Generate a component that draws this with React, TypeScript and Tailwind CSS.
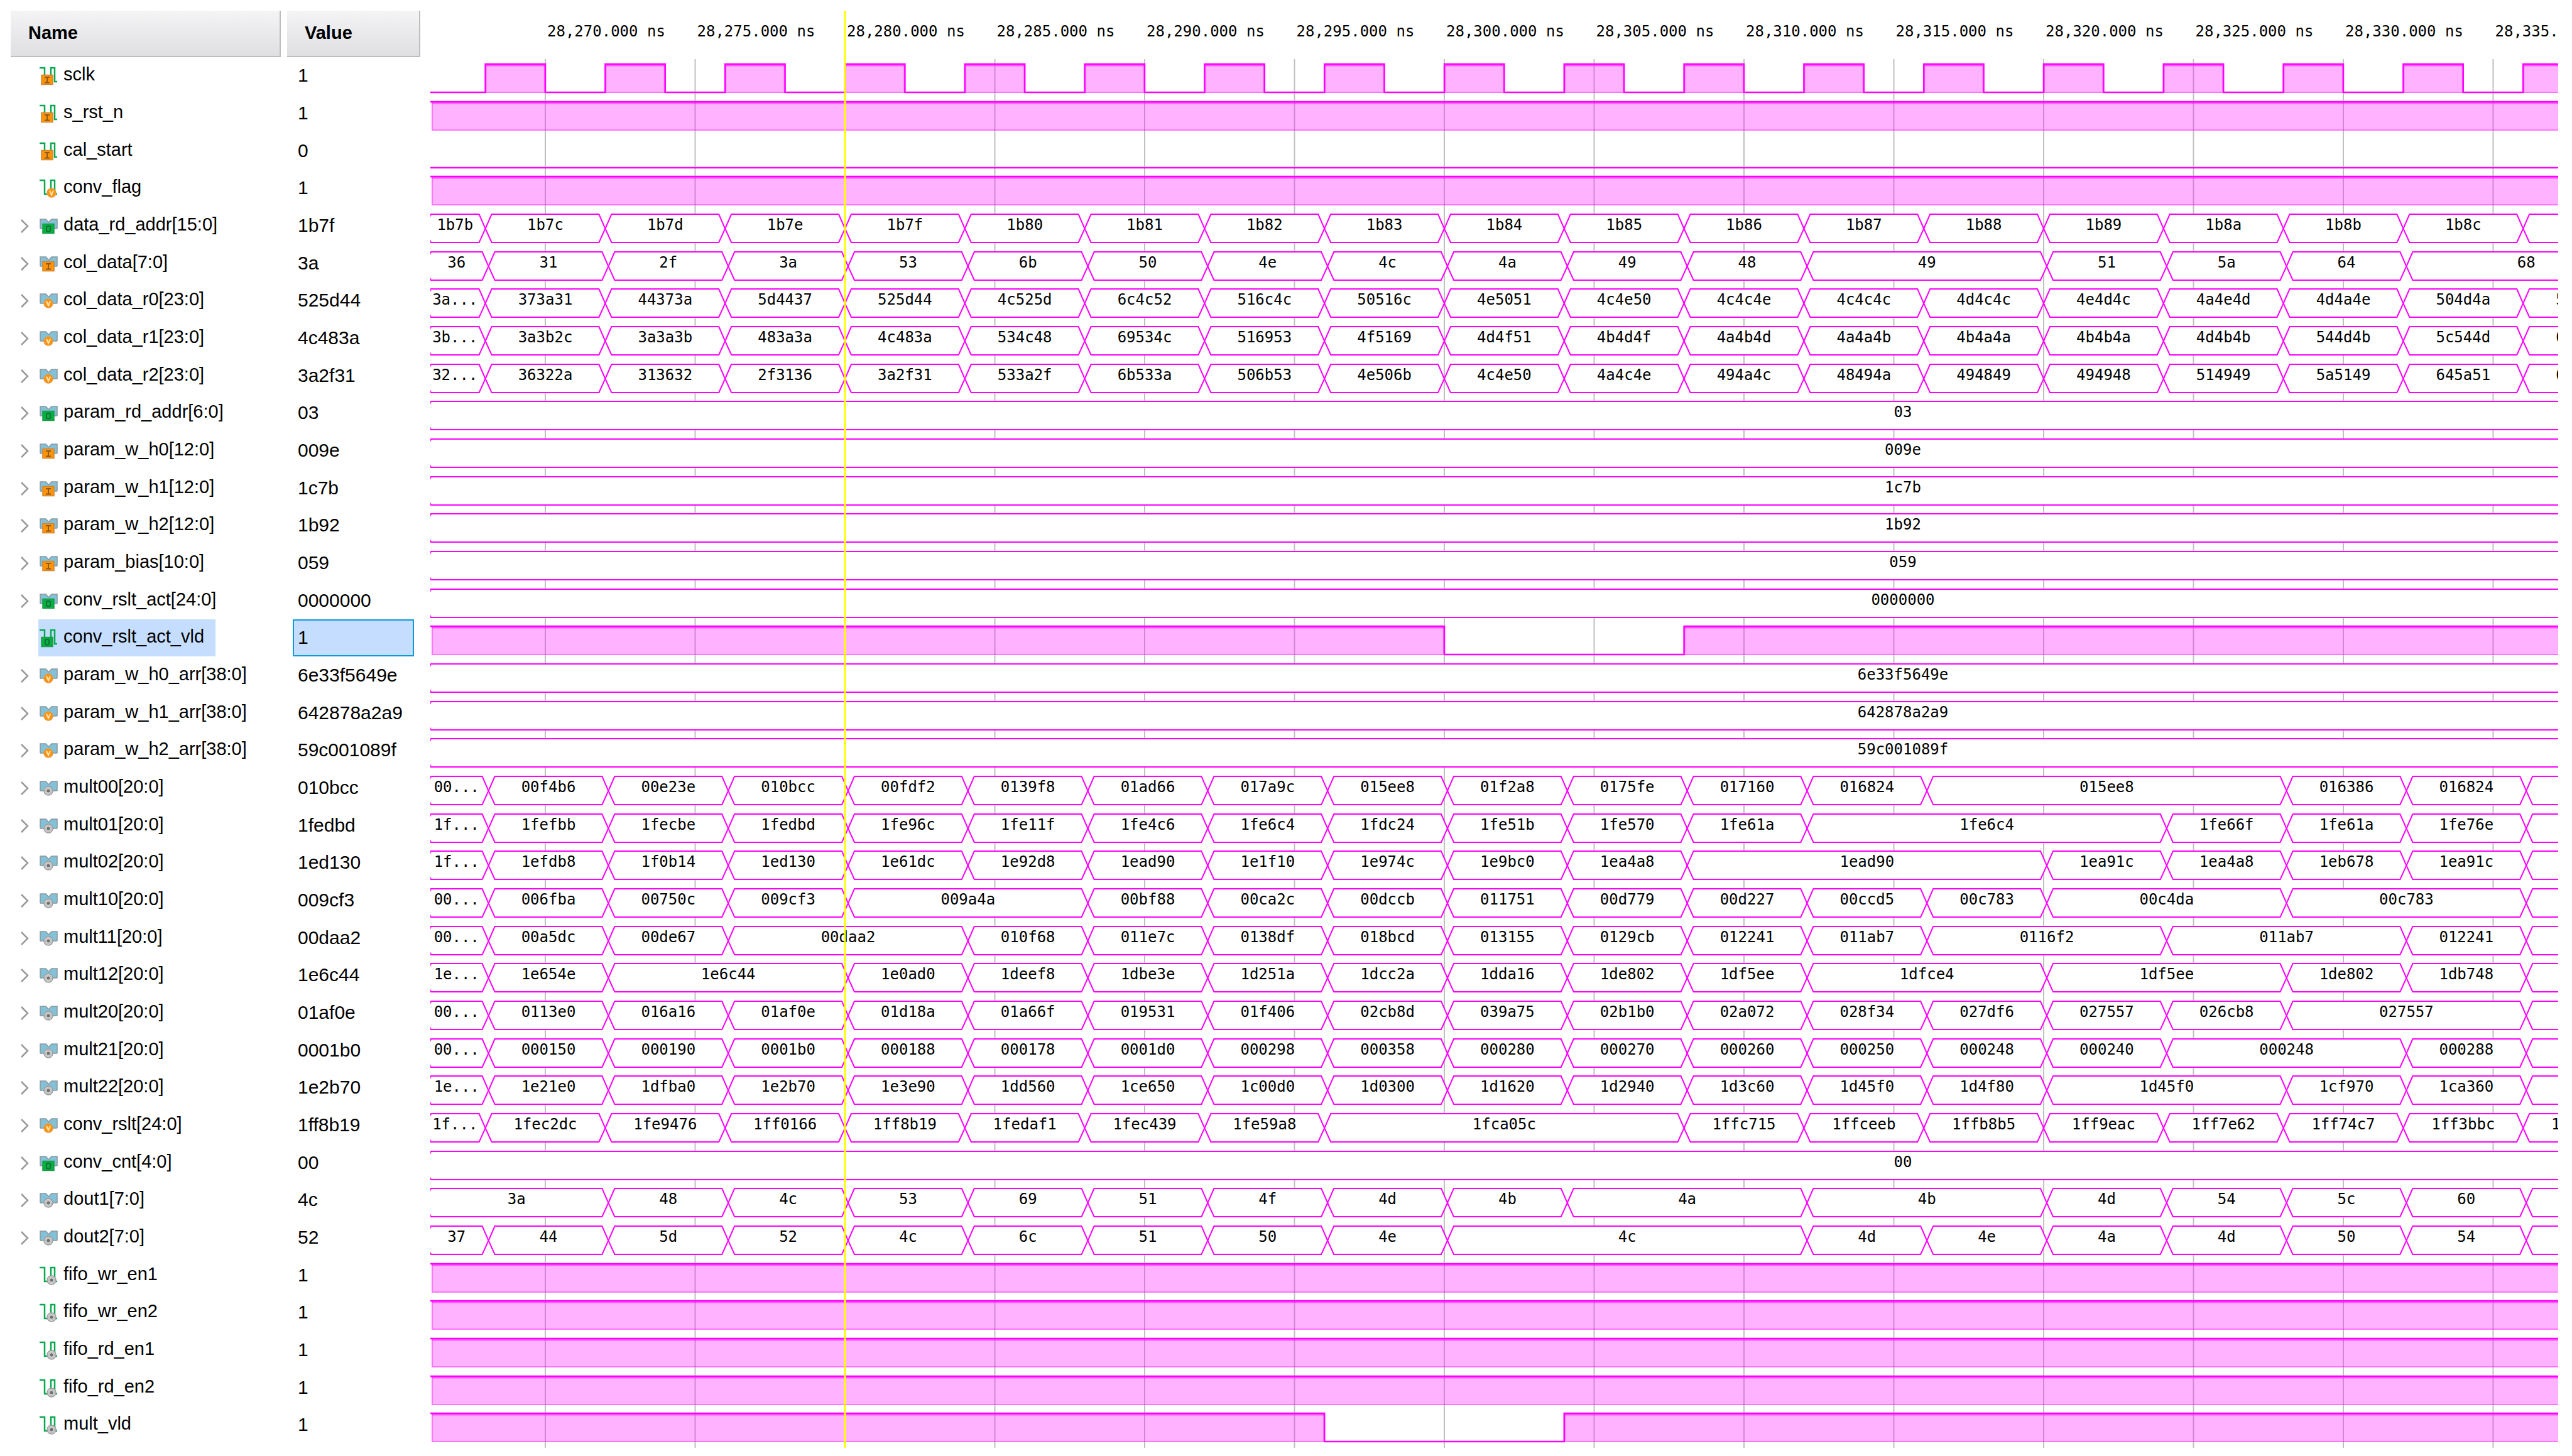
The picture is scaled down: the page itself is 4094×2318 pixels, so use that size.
import clsx from "clsx";

type Kind = "bit" | "bus";
type Badge = "in" | "out" | "var" | "reg";

type Signal = {
  name: string;
  value: string;
  kind: Kind;
  badge: Badge;
  // bus: values in clock order, "v*3" lasts three clocks
  data?: string;
  // bus that changes slightly after the clock edge
  late?: boolean;
  // bit: [from, to] spans in clocks where the line is high
  high?: number[][];
  selected?: boolean;
};

const PX_PER_NS = 47.7;
const START_NS = 28270;
const START_X = 183;
const CLOCK = PX_PER_NS * 4;
const FIRST_EDGE = START_X - PX_PER_NS * 2;
const CURSOR_NS = 28280;
const FAR = 4697;
const ALWAYS = [[-1, 40]];

const edge = (k: number) => FIRST_EDGE + k * CLOCK;
const rowTop = (i: number) => 91 + i * 60 - Math.floor(i / 3);

const ticks = Array.from({ length: 14 }, (_, i) => START_NS + i * 5);
const clockHigh = Array.from({ length: 18 }, (_, i) => [i, i + 0.5]);

const signals: Signal[] = [
  { name: "sclk", value: "1", kind: "bit", badge: "in", high: clockHigh },
  { name: "s_rst_n", value: "1", kind: "bit", badge: "in", high: ALWAYS },
  { name: "cal_start", value: "0", kind: "bit", badge: "in", high: [] },
  { name: "conv_flag", value: "1", kind: "bit", badge: "var", high: ALWAYS },
  {
    name: "data_rd_addr[15:0]", value: "1b7f", kind: "bus", badge: "out",
    data: "1b7b 1b7c 1b7d 1b7e 1b7f 1b80 1b81 1b82 1b83 1b84 1b85 1b86 1b87 1b88 1b89 1b8a 1b8b 1b8c",
  },
  {
    name: "col_data[7:0]", value: "3a", kind: "bus", badge: "in", late: true,
    data: "36 31 2f 3a 53 6b 50 4e 4c 4a 49 48 49*2 51 5a 64 68*2",
  },
  {
    name: "col_data_r0[23:0]", value: "525d44", kind: "bus", badge: "var",
    data: "3a... 373a31 44373a 5d4437 525d44 4c525d 6c4c52 516c4c 50516c 4e5051 4c4e50 4c4c4e 4c4c4c 4d4c4c 4e4d4c 4a4e4d 4d4a4e 504d4a 54504d",
  },
  {
    name: "col_data_r1[23:0]", value: "4c483a", kind: "bus", badge: "var",
    data: "3b... 3a3b2c 3a3a3b 483a3a 4c483a 534c48 69534c 516953 4f5169 4d4f51 4b4d4f 4a4b4d 4a4a4b 4b4a4a 4b4b4a 4d4b4b 544d4b 5c544d 605c54",
  },
  {
    name: "col_data_r2[23:0]", value: "3a2f31", kind: "bus", badge: "var",
    data: "32... 36322a 313632 2f3136 3a2f31 533a2f 6b533a 506b53 4e506b 4c4e50 4a4c4e 494a4c 48494a 494849 494948 514949 5a5149 645a51 68645a",
  },
  { name: "param_rd_addr[6:0]", value: "03", kind: "bus", badge: "out" },
  { name: "param_w_h0[12:0]", value: "009e", kind: "bus", badge: "in" },
  { name: "param_w_h1[12:0]", value: "1c7b", kind: "bus", badge: "in" },
  { name: "param_w_h2[12:0]", value: "1b92", kind: "bus", badge: "in" },
  { name: "param_bias[10:0]", value: "059", kind: "bus", badge: "in" },
  { name: "conv_rslt_act[24:0]", value: "0000000", kind: "bus", badge: "out" },
  {
    name: "conv_rslt_act_vld", value: "1", kind: "bit", badge: "out", selected: true,
    high: [[-1, 8], [10, 40]],
  },
  { name: "param_w_h0_arr[38:0]", value: "6e33f5649e", kind: "bus", badge: "var" },
  { name: "param_w_h1_arr[38:0]", value: "642878a2a9", kind: "bus", badge: "var" },
  { name: "param_w_h2_arr[38:0]", value: "59c001089f", kind: "bus", badge: "var" },
  {
    name: "mult00[20:0]", value: "010bcc", kind: "bus", badge: "reg", late: true,
    data: "00... 00f4b6 00e23e 010bcc 00fdf2 0139f8 01ad66 017a9c 015ee8 01f2a8 0175fe 017160 016824 015ee8*3 016386 016824",
  },
  {
    name: "mult01[20:0]", value: "1fedbd", kind: "bus", badge: "reg", late: true,
    data: "1f... 1fefbb 1fecbe 1fedbd 1fe96c 1fe11f 1fe4c6 1fe6c4 1fdc24 1fe51b 1fe570 1fe61a 1fe6c4*3 1fe66f 1fe61a 1fe76e",
  },
  {
    name: "mult02[20:0]", value: "1ed130", kind: "bus", badge: "reg", late: true,
    data: "1f... 1efdb8 1f0b14 1ed130 1e61dc 1e92d8 1ead90 1e1f10 1e974c 1e9bc0 1ea4a8 1ead90*3 1ea91c 1ea4a8 1eb678 1ea91c",
  },
  {
    name: "mult10[20:0]", value: "009cf3", kind: "bus", badge: "reg", late: true,
    data: "00... 006fba 00750c 009cf3 009a4a*2 00bf88 00ca2c 00dccb 011751 00d779 00d227 00ccd5 00c783 00c4da*2 00c783*2",
  },
  {
    name: "mult11[20:0]", value: "00daa2", kind: "bus", badge: "reg", late: true,
    data: "00... 00a5dc 00de67 00daa2*2 010f68 011e7c 0138df 018bcd 013155 0129cb 012241 011ab7 0116f2*2 011ab7*2 012241",
  },
  {
    name: "mult12[20:0]", value: "1e6c44", kind: "bus", badge: "reg", late: true,
    data: "1e... 1e654e 1e6c44*2 1e0ad0 1deef8 1dbe3e 1d251a 1dcc2a 1dda16 1de802 1df5ee 1dfce4*2 1df5ee*2 1de802 1db748",
  },
  {
    name: "mult20[20:0]", value: "01af0e", kind: "bus", badge: "reg", late: true,
    data: "00... 0113e0 016a16 01af0e 01d18a 01a66f 019531 01f406 02cb8d 039a75 02b1b0 02a072 028f34 027df6 027557 026cb8 027557*2",
  },
  {
    name: "mult21[20:0]", value: "0001b0", kind: "bus", badge: "reg", late: true,
    data: "00... 000150 000190 0001b0 000188 000178 0001d0 000298 000358 000280 000270 000260 000250 000248 000240 000248*2 000288",
  },
  {
    name: "mult22[20:0]", value: "1e2b70", kind: "bus", badge: "reg", late: true,
    data: "1e... 1e21e0 1dfba0 1e2b70 1e3e90 1dd560 1ce650 1c00d0 1d0300 1d1620 1d2940 1d3c60 1d45f0 1d4f80 1d45f0*2 1cf970 1ca360",
  },
  {
    name: "conv_rslt[24:0]", value: "1ff8b19", kind: "bus", badge: "var",
    data: "1f... 1fec2dc 1fe9476 1ff0166 1ff8b19 1fedaf1 1fec439 1fe59a8 1fca05c*3 1ffc715 1ffceeb 1ffb8b5 1ff9eac 1ff7e62 1ff74c7 1ff3bbc 1ff3bbc",
  },
  { name: "conv_cnt[4:0]", value: "00", kind: "bus", badge: "out" },
  {
    name: "dout1[7:0]", value: "4c", kind: "bus", badge: "reg", late: true,
    data: "3a*2 48 4c 53 69 51 4f 4d 4b 4a*2 4b*2 4d 54 5c 60",
  },
  {
    name: "dout2[7:0]", value: "52", kind: "bus", badge: "reg", late: true,
    data: "37 44 5d 52 4c 6c 51 50 4e 4c*3 4d 4e 4a 4d 50 54",
  },
  { name: "fifo_wr_en1", value: "1", kind: "bit", badge: "reg", high: ALWAYS },
  { name: "fifo_wr_en2", value: "1", kind: "bit", badge: "reg", high: ALWAYS },
  { name: "fifo_rd_en1", value: "1", kind: "bit", badge: "reg", high: ALWAYS },
  { name: "fifo_rd_en2", value: "1", kind: "bit", badge: "reg", high: ALWAYS },
  { name: "mult_vld", value: "1", kind: "bit", badge: "reg", high: [[-1, 7], [9, 40]] },
];

function BadgeMark({ badge, x, y }: { badge: Badge; x: number; y: number }) {
  if (badge === "in") {
    return (
      <g transform={`translate(${x} ${y})`}>
        <rect x="-9" y="-7.5" width="18" height="15" fill="#ff9408" stroke="#cf8534" strokeWidth="1.5" />
        <path d="M-4 -4H4M-4 4.5H4M0 -4V4.5" stroke="#8a5a22" strokeWidth="2" fill="none" />
      </g>
    );
  }
  if (badge === "out") {
    return (
      <g transform={`translate(${x} ${y})`}>
        <rect x="-9" y="-7.5" width="18" height="15" fill="#00b140" stroke="#1f9a4c" strokeWidth="1.5" />
        <rect x="-3" y="-4" width="6" height="8.5" rx="2" stroke="#1d6b38" strokeWidth="2" fill="none" />
      </g>
    );
  }
  if (badge === "var") {
    return (
      <g transform={`translate(${x} ${y})`}>
        <circle r="7" fill="#ff9408" stroke="#e39a45" strokeWidth="1.5" />
        <path d="M-3 -3.5L0 3.5L3 -3.5" stroke="#ffe2b8" strokeWidth="2" fill="none" />
      </g>
    );
  }
  return (
    <g transform={`translate(${x} ${y})`}>
      <circle r="7" fill="#d2d2d2" stroke="#9c9c9c" strokeWidth="1.5" />
      <circle r="4.5" fill="none" stroke="#b4b4b4" strokeWidth="1" />
      <circle r="2.5" fill="#6e6e6e" />
    </g>
  );
}

function SignalIcon({ kind, badge }: { kind: Kind; badge: Badge }) {
  const round = badge === "var" || badge === "reg";
  if (kind === "bit") {
    return (
      <svg width="29" height="30" viewBox="0 0 29 30" aria-hidden="true">
        <path d="M0 2H8V24H18V2H24V24H28" fill="none" stroke="#08a850" strokeWidth="2.5" />
        <BadgeMark badge={badge} x={round ? 19 : 12} y={round ? 22 : 21} />
      </svg>
    );
  }
  return (
    <svg width="29" height="26" viewBox="0 0 29 26" aria-hidden="true">
      <path d="M1 2H10L14.5 7L19 2H28V17H1Z" fill="#82c1d8" />
      <path d="M1 17V2H10L14.5 7L19 2H28V17" fill="none" stroke="#8b989e" strokeWidth="1.5" />
      <path d="M1 17H28" stroke="#8b989e" strokeWidth="1.5" />
      <BadgeMark badge={badge} x={14} y={17} />
    </svg>
  );
}

function parseBus(signal: Signal) {
  if (!signal.data) return [{ from: -9, to: FAR, text: signal.value }];
  const shift = signal.late ? 5 : 0;
  const segments: { from: number; to: number; text: string }[] = [];
  let k = -1;
  let from = -9;
  for (const token of signal.data.split(" ")) {
    const [text, count] = token.split("*");
    k += Number(count ?? 1);
    const to = edge(k) + shift;
    segments.push({ from, to, text });
    from = to;
  }
  segments.push({ from, to: FAR, text: "" });
  return segments;
}

function BusWave({ signal, y }: { signal: Signal; y: number }) {
  const top = y + 11;
  const mid = y + 34;
  const bottom = y + 56;
  return (
    <g>
      {parseBus(signal).map(({ from, to, text }) => (
        <g key={from}>
          <path
            d={`M${from} ${mid}L${from + 10} ${top}H${to - 10}L${to} ${mid}L${to - 10} ${bottom}H${from + 10}Z`}
            fill="#fff"
            stroke="#f0f"
            strokeWidth="2"
          />
          {text && (
            <text x={(from + to) / 2} y={y + 36} textAnchor="middle">
              {text}
            </text>
          )}
        </g>
      ))}
    </g>
  );
}

function BitWave({ signal, y }: { signal: Signal; y: number }) {
  const top = y + 11;
  const bottom = y + 56;
  const spans = (signal.high ?? []).map(([a, b]) => [a < 0 ? 2 : edge(a), edge(b)]);
  let line = spans.length && spans[0][0] === 2 ? `M0 ${top}` : `M0 ${bottom}`;
  for (const [a, b] of spans) {
    line += a === 2 ? `H${b}V${bottom}` : `H${a}V${top}H${b}V${bottom}`;
  }
  line += "H9000";
  return (
    <g>
      {spans.map(([a, b]) => (
        <g key={a}>
          <rect x={a} y={top} width={b - a} height={bottom - top + 1} fill="#f0f" fillOpacity="0.3" />
          <rect x={a + 1} y={top} width={b - a - 2} height={bottom - top} fill="none" stroke="#f0f" strokeOpacity="0.35" strokeWidth="2" />
          <path d={`M${a} ${top + 2}H${b}`} stroke="#f0f" strokeOpacity="0.5" strokeWidth="3" />
        </g>
      ))}
      <path d={line} fill="none" stroke="#f0f" strokeWidth="2.5" />
    </g>
  );
}

function Waveforms() {
  const end = rowTop(signals.length) + 6;
  const cursorX = START_X + (CURSOR_NS - START_NS) * PX_PER_NS;
  return (
    <svg
      width="100%"
      height={end}
      role="img"
      aria-label="Waveforms"
      className="block font-['DejaVu_Sans_Mono','Liberation_Mono',monospace] text-[24px]"
    >
      {ticks.map((ns) => {
        const x = START_X + (ns - START_NS) * PX_PER_NS;
        return (
          <g key={ns}>
            <path d={`M${x} 94V${end}`} stroke="#c0c0c0" strokeWidth="2" />
            <text x={x + 3} y="58">
              {`28,${ns - 28000}.000 ns`}
            </text>
          </g>
        );
      })}
      {signals.map((signal, i) =>
        signal.kind === "bus" ? (
          <BusWave key={signal.name} signal={signal} y={rowTop(i)} />
        ) : (
          <BitWave key={signal.name} signal={signal} y={rowTop(i)} />
        )
      )}
      <path d={`M${cursorX} 17V${end}`} stroke="#ff0" strokeWidth="3" />
    </svg>
  );
}

function HeaderCell({ children }: { children: string }) {
  return (
    <div className="flex h-[74px] items-center border-r-2 border-b-2 border-[#bdbdbf] bg-linear-to-b from-[#f4f4f5] to-[#dfdfe2] pl-7 text-[29px] font-bold">
      {children}
    </div>
  );
}

export default function App() {
  return (
    <main className="flex min-h-screen items-start bg-white pr-[22px] font-['Liberation_Sans',Arial,sans-serif] text-black">
      <table className="mt-[17px] ml-[17px] w-[652px] shrink-0 table-fixed border-collapse text-left">
        <thead>
          <tr>
            <th scope="col" className="w-[440px] p-0 pr-[10px]">
              <HeaderCell>Name</HeaderCell>
            </th>
            <th scope="col" className="p-0">
              <HeaderCell>Value</HeaderCell>
            </th>
          </tr>
        </thead>
        <tbody>
          {signals.map((s) => (
            <tr key={s.name} className="h-[60px] nth-[3n]:h-[59px]">
              <td className="p-0 align-top">
                <div className="flex h-[59px] items-center">
                  <div className="flex w-11 shrink-0 justify-center">
                    {s.kind === "bus" && (
                      <button type="button" aria-label={`Expand ${s.name}`} className="block">
                        <svg width="14" height="22" viewBox="0 0 14 22" aria-hidden="true">
                          <path d="M2 1L12 11L2 21" fill="none" stroke="#999" strokeWidth="2.5" />
                        </svg>
                      </button>
                    )}
                  </div>
                  <div
                    className={clsx(
                      "flex h-full items-center gap-[9px] pr-[18px] pl-[2px] text-[29px] whitespace-nowrap",
                      s.selected && "bg-[#c5deff]"
                    )}
                  >
                    <SignalIcon kind={s.kind} badge={s.badge} />
                    <span className="pb-[3px]">{s.name}</span>
                  </div>
                </div>
              </td>
              <td className="p-0 align-top">
                <div
                  className={clsx(
                    "ml-[9px] flex h-[59px] w-[193px] items-center border-2 pb-[3px] pl-[6px] text-[30px]",
                    s.selected ? "border-[#0c9ad8] bg-[#c5deff]" : "border-transparent"
                  )}
                >
                  {s.value}
                </div>
              </td>
            </tr>
          ))}
        </tbody>
      </table>
      <section className="ml-4 min-w-0 flex-1">
        <Waveforms />
      </section>
    </main>
  );
}
